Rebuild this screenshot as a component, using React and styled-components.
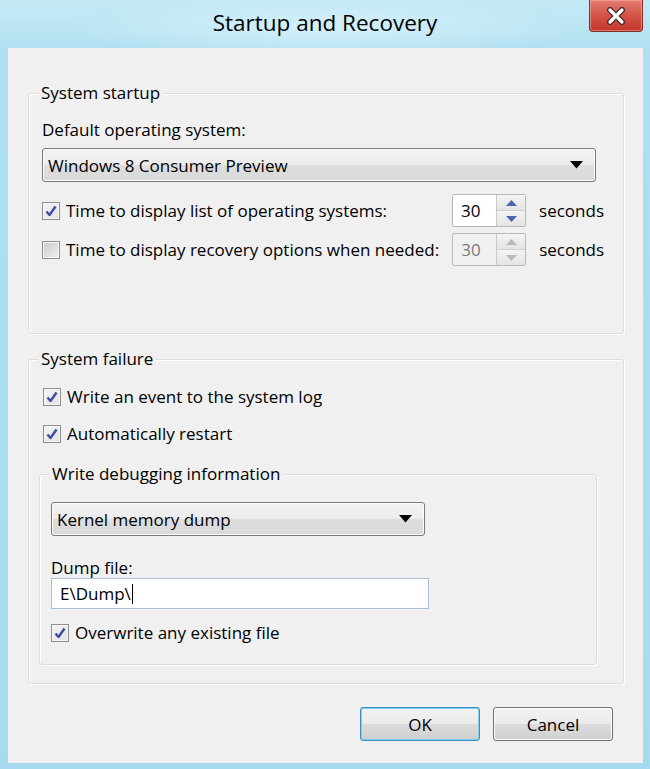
import styled, { createGlobalStyle } from 'styled-components'

const GlobalStyle = createGlobalStyle`
  html, body {
    margin: 0;
    padding: 0;
    background: #a9dcef;
  }
  body {
    font-family: "Open Sans", "Noto Sans", sans-serif;
    color: #000;
  }
`

function CloseGlyph() {
  return (
    <svg width="22" height="18" viewBox="0 0 22 18">
      <path d="M5 3 L17 15 M17 3 L5 15" stroke="#4a2a28" strokeWidth="6" strokeLinecap="round" />
      <path d="M5 3 L17 15 M17 3 L5 15" stroke="#fff" strokeWidth="3.2" strokeLinecap="round" />
    </svg>
  )
}

function Arrow() {
  return (
    <svg width="13" height="8" viewBox="0 0 13 8">
      <path d="M0 0 H13 L6.5 7.5 Z" fill="#000" />
    </svg>
  )
}

function Check() {
  return (
    <svg width="14" height="14" viewBox="0 0 14 14">
      <path d="M2.5 7.5 L5.5 11 L11.5 2.5" fill="none" stroke="#3b4ea6" strokeWidth="2.4" strokeLinejoin="round" />
    </svg>
  )
}

function CheckRow({ checked, children }) {
  return (
    <CheckLine>
      <Box $checked={checked}>{checked && <Check />}</Box>
      <span>{children}</span>
    </CheckLine>
  )
}

function Spinner({ value, disabled }) {
  return (
    <SpinBox $disabled={disabled}>
      <SpinValue $disabled={disabled}>{value}</SpinValue>
      <SpinButtons>
        <SpinButton $disabled={disabled}>
          <svg width="11" height="6" viewBox="0 0 11 6"><path d="M0 6 L5.5 0 L11 6 Z" /></svg>
        </SpinButton>
        <SpinButton $disabled={disabled}>
          <svg width="11" height="6" viewBox="0 0 11 6"><path d="M0 0 L11 0 L5.5 6 Z" /></svg>
        </SpinButton>
      </SpinButtons>
    </SpinBox>
  )
}

export default function App() {
  return (
    <>
      <GlobalStyle />
      <Window>
        <TitleBar>
          <span />
          <Title>Startup and Recovery</Title>
          <CloseButton aria-label="Close">
            <CloseGlyph />
          </CloseButton>
        </TitleBar>

        <Body>
          <Group $pad="25px 19px 67px 13px">
            <Legend>System startup</Legend>
            <Label>Default operating system:</Label>
            <Select $mt="7px" $mr="8px">
              <span>Windows 8 Consumer Preview</span>
              <Arrow />
            </Select>
            <TimeRow $top="12px">
              <CheckRow checked>Time to display list of operating systems:</CheckRow>
              <Spinner value="30" />
              <Unit>seconds</Unit>
            </TimeRow>
            <TimeRow $top="6px">
              <CheckRow>Time to display recovery options when needed:</CheckRow>
              <Spinner value="30" disabled />
              <Unit>seconds</Unit>
            </TimeRow>
          </Group>

          <Group $pad="26px 26px 18px 10px" $top="25px">
            <Legend>System failure</Legend>
            <Indent>
              <CheckRow checked>Write an event to the system log</CheckRow>
              <Spacer $h="15px" />
              <CheckRow checked>Automatically restart</CheckRow>
            </Indent>

            <Group $pad="27px 167px 20px 11px" $top="29px">
              <Legend>Write debugging information</Legend>
              <Select $mt="0" $mr="4px">
                <span>Kernel memory dump</span>
                <Arrow />
              </Select>
              <DumpLabel>Dump file:</DumpLabel>
              <TextInput>
                E\Dump\<Caret />
              </TextInput>
              <Spacer $h="13px" />
              <CheckRow checked>Overwrite any existing file</CheckRow>
            </Group>
          </Group>

          <Footer>
            <Button $default>OK</Button>
            <Button>Cancel</Button>
          </Footer>
        </Body>
      </Window>
    </>
  )
}

// styled-components
const Window = styled.div`
  width: 650px;
  height: 769px;
  display: flex;
  flex-direction: column;
  background: linear-gradient(180deg, #bfe7f5 0%, #aee0f2 6%, #a6dbef 100%);
  box-sizing: border-box;
  padding: 0 7px 6px 8px;
`

const TitleBar = styled.div`
  height: 48px;
  display: grid;
  grid-template-columns: 1fr auto 1fr;
  margin: 0 -7px 0 -8px;
  background: radial-gradient(ellipse 260px 30px at 50% 55%, #d4f0fa 0%, rgba(212, 240, 250, 0) 100%),
    linear-gradient(180deg, #c4e9f6 0%, #b3e1f2 100%);
`

const Title = styled.h1`
  margin: 0 0 3px;
  align-self: center;
  font-size: 22.5px;
  font-weight: 400;
  color: #000;
`

const CloseButton = styled.button`
  justify-self: end;
  align-self: start;
  margin-right: 7px;
  width: 54px;
  height: 32px;
  border: 1px solid #8b2c24;
  border-top: none;
  border-radius: 0 0 4px 4px;
  background: linear-gradient(180deg, #e47c72 0%, #d5564a 45%, #c2352a 100%);
  box-shadow: inset 0 0 0 1px rgba(255, 200, 190, 0.45);
  display: flex;
  align-items: center;
  justify-content: center;
  padding: 0;
`

const Body = styled.div`
  flex: 1;
  background: #f0f0f0;
  padding: 45px 19px 0 20px;
  display: flex;
  flex-direction: column;
  font-size: 17px;
`

const Group = styled.div`
  position: relative;
  margin-top: ${p => p.$top || '0'};
  padding: ${p => p.$pad};
  border: 1px solid #d5dfe5;
  border-radius: 3px;
  box-shadow: 1px 1px 0 #fff, inset 1px 1px 0 #fff;
  display: flex;
  flex-direction: column;
`

const Legend = styled.span`
  position: absolute;
  top: -12px;
  left: 9px;
  padding: 0 3px;
  background: #f0f0f0;
  line-height: 22px;
`

const Label = styled.div`
  line-height: 22px;
`

const Select = styled.div`
  margin-top: ${p => p.$mt};
  margin-right: ${p => p.$mr};
  height: 34px;
  box-sizing: border-box;
  border: 1px solid #7a7a7a;
  border-radius: 3px;
  background: linear-gradient(180deg, #f3f3f3 0%, #ececec 50%, #dedede 51%, #d9d9d9 100%);
  box-shadow: inset 0 0 0 1px #fbfbfb;
  display: flex;
  align-items: center;
  justify-content: space-between;
  padding: 0 12px 0 5px;
`

const TimeRow = styled.div`
  margin-top: ${p => p.$top};
  display: grid;
  grid-template-columns: 1fr 74px auto;
  align-items: center;
  column-gap: 13px;
`

const CheckLine = styled.div`
  display: flex;
  align-items: center;
  gap: 6px;
  line-height: 22px;
  white-space: nowrap;
`

const Box = styled.span`
  width: 18px;
  height: 18px;
  box-sizing: border-box;
  border: 1px solid #8e8f8f;
  background: ${p => (p.$checked
    ? 'linear-gradient(135deg, #f4f4f4 0%, #e2e2e2 100%)'
    : 'linear-gradient(135deg, #cbcbcb 0%, #eeeeee 100%)')};
  box-shadow: inset 0 0 0 1px #f6f6f6;
  display: flex;
  align-items: center;
  justify-content: center;
  flex-shrink: 0;
`

const SpinBox = styled.div`
  height: 33px;
  box-sizing: border-box;
  border: 1px solid #b9b9b9;
  border-radius: 2px;
  background: ${p => (p.$disabled ? '#f0f0f0' : '#fff')};
  display: flex;
  align-items: stretch;
`

const SpinValue = styled.span`
  flex: 1;
  display: flex;
  align-items: center;
  padding-left: 8px;
  color: ${p => (p.$disabled ? '#7a7a7a' : '#000')};
`

const SpinButtons = styled.div`
  width: 28px;
  display: flex;
  flex-direction: column;
  border-left: 1px solid #c9c9c9;
`

const SpinButton = styled.div`
  flex: 1;
  display: flex;
  align-items: center;
  justify-content: center;
  background: linear-gradient(180deg, #f4f4f4 0%, #e4e4e4 100%);
  border-bottom: 1px solid #d0d0d0;
  fill: ${p => (p.$disabled ? '#b8b8b8' : '#4e63b0')};

  &:last-child {
    border-bottom: none;
  }
`

const Unit = styled.span`
  line-height: 22px;
`

const Indent = styled.div`
  padding-left: 4px;
  display: flex;
  flex-direction: column;
`

const Spacer = styled.div`
  height: ${p => p.$h};
`

const DumpLabel = styled.div`
  margin-top: 22px;
  line-height: 20px;
`

const TextInput = styled.div`
  height: 31px;
  box-sizing: border-box;
  border: 1px solid #abc0d6;
  background: #fff;
  display: flex;
  align-items: center;
  padding-left: 8px;
`

const Caret = styled.span`
  display: inline-block;
  width: 1px;
  height: 20px;
  background: #000;
  margin-left: 1px;
`

const Footer = styled.div`
  display: flex;
  justify-content: flex-end;
  gap: 13px;
  padding: 23px 11px 0 0;
`

const Button = styled.button`
  width: 120px;
  height: 34px;
  font: inherit;
  color: #000;
  border: 1px solid ${p => (p.$default ? '#3c8ec4' : '#707070')};
  border-radius: 3px;
  background: linear-gradient(180deg, #f2f2f2 0%, #ebebeb 50%, #dddddd 51%, #cfcfcf 100%);
  box-shadow: ${p => (p.$default ? 'inset 0 0 0 1px #7fd0f0' : 'inset 0 0 0 1px #fcfcfc')};
  padding: 0;
`
